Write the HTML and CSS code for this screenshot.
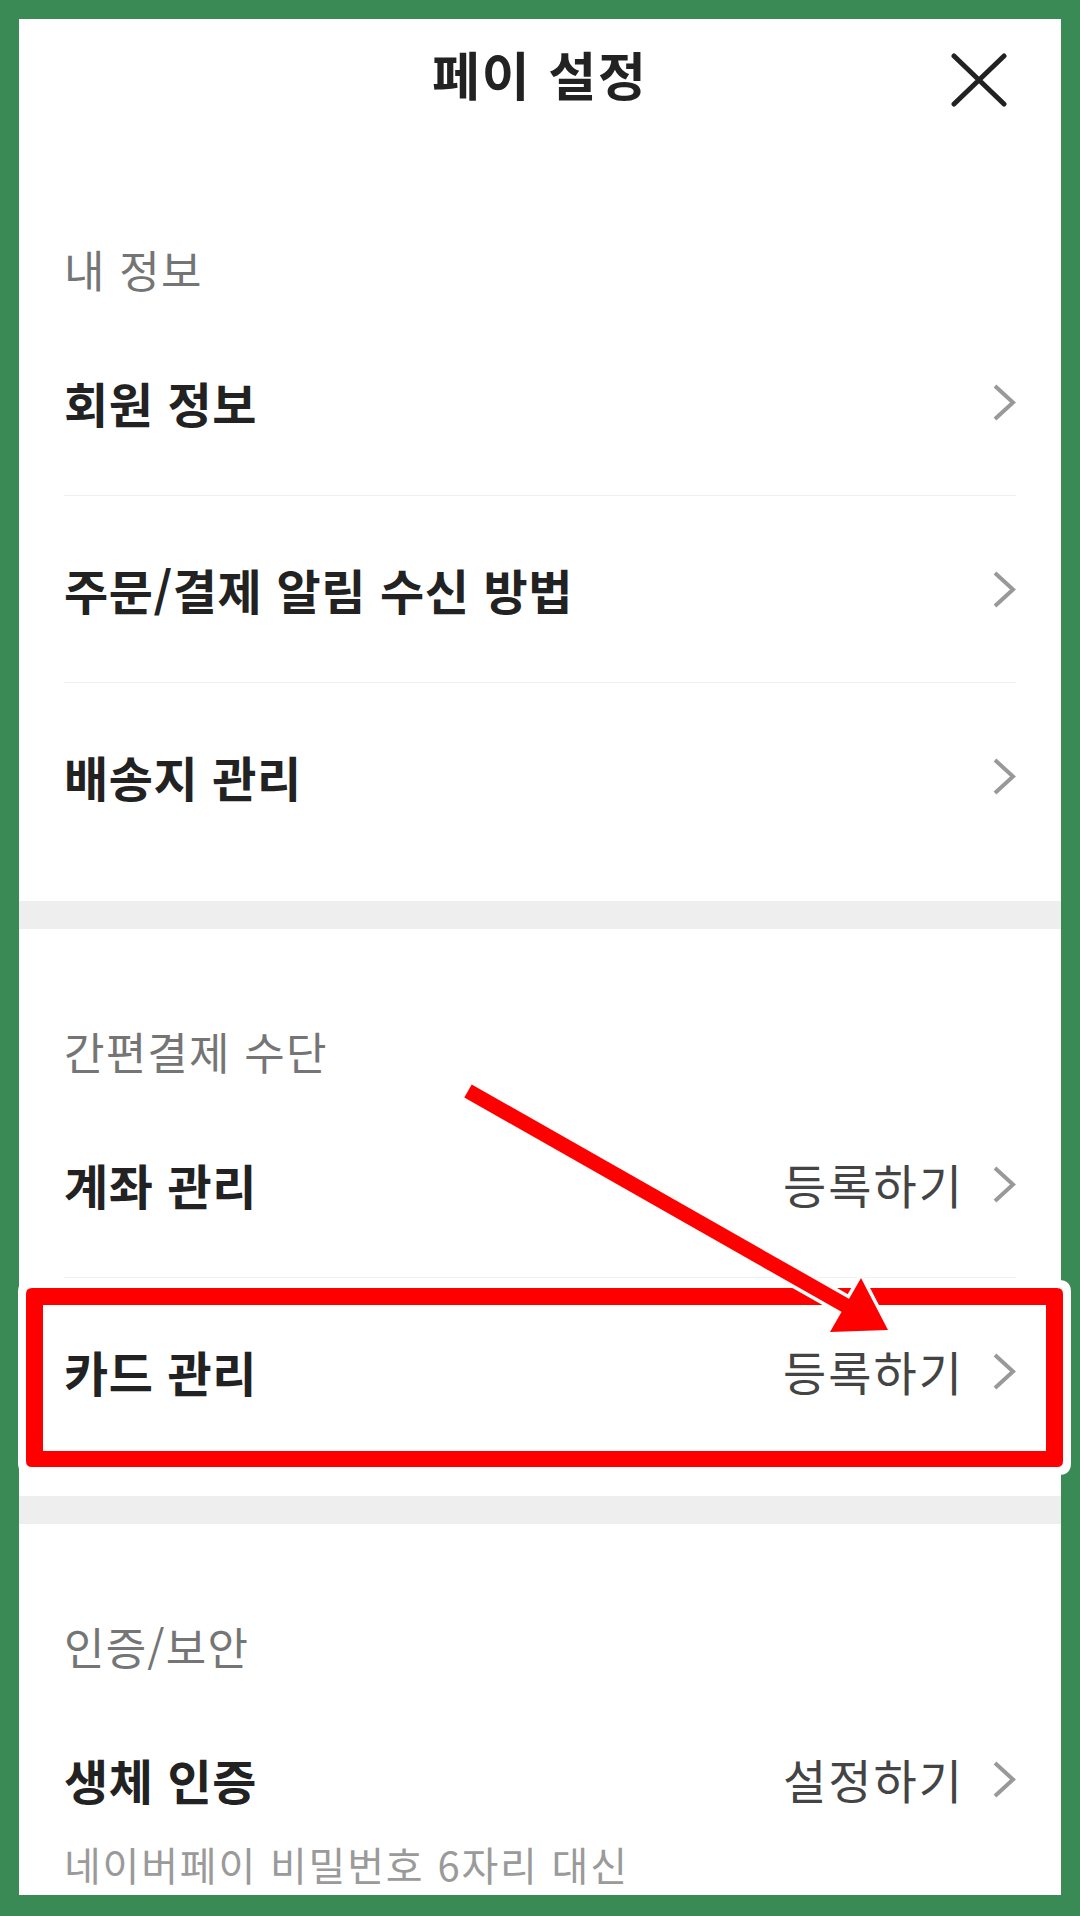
FILE: index.html
```html
<!DOCTYPE html>
<html lang="ko">
<head>
    <meta charset="UTF-8">
    <meta name="viewport" content="width=device-width, initial-scale=1.0">
    <title>페이 설정</title>
    <link rel="stylesheet" href="styles.css">
</head>
<body>

<div class="sheet">
    <header class="top-bar">
        <span></span>
        <h1>페이 설정</h1>
        <button class="close" aria-label="닫기">
            <svg width="56" height="54" viewBox="0 0 56 54">
                <path d="M3 3 L53 51 M53 3 L3 51" stroke="#222" stroke-width="5" stroke-linecap="round" fill="none"/>
            </svg>
        </button>
    </header>

    <section class="group first">
        <h2 class="group-title">내 정보</h2>
        <ul class="menu">
            <li class="menu-row">
                <span class="menu-name">회원 정보</span>
                <span class="menu-side"><svg class="chevron" viewBox="0 0 23 37"><polyline points="2,2 20,18.5 2,35"/></svg></span>
            </li>
            <li class="menu-row">
                <span class="menu-name">주문/결제 알림 수신 방법</span>
                <span class="menu-side"><svg class="chevron" viewBox="0 0 23 37"><polyline points="2,2 20,18.5 2,35"/></svg></span>
            </li>
            <li class="menu-row">
                <span class="menu-name">배송지 관리</span>
                <span class="menu-side"><svg class="chevron" viewBox="0 0 23 37"><polyline points="2,2 20,18.5 2,35"/></svg></span>
            </li>
        </ul>
    </section>

    <div class="band"></div>

    <section class="group">
        <h2 class="group-title">간편결제 수단</h2>
        <ul class="menu">
            <li class="menu-row">
                <span class="menu-name">계좌 관리</span>
                <span class="menu-side">등록하기<svg class="chevron" viewBox="0 0 23 37"><polyline points="2,2 20,18.5 2,35"/></svg></span>
            </li>
            <li class="menu-row">
                <span class="menu-name">카드 관리</span>
                <span class="menu-side">등록하기<svg class="chevron" viewBox="0 0 23 37"><polyline points="2,2 20,18.5 2,35"/></svg></span>
            </li>
        </ul>
    </section>

    <div class="band"></div>

    <section class="group">
        <h2 class="group-title">인증/보안</h2>
        <ul class="menu">
            <li class="menu-row tall">
                <div class="menu-line">
                    <span class="menu-name">생체 인증</span>
                    <span class="menu-side">설정하기<svg class="chevron" viewBox="0 0 23 37"><polyline points="2,2 20,18.5 2,35"/></svg></span>
                </div>
                <p class="menu-note">네이버페이 비밀번호 6자리 대신</p>
            </li>
        </ul>
    </section>
</div>

<!-- red markup drawn over the screenshot -->
<svg class="markup" width="1080" height="1916" viewBox="0 0 1080 1916">
    <path fill="#fff" fill-rule="evenodd" d="M30 1280 H1059 Q1071 1280 1071 1292 V1463 Q1071 1475 1059 1475 H30 Q18 1475 18 1463 V1292 Q18 1280 30 1280 Z M43 1305 H1046 V1451 H43 Z"/>
    <path fill="#ff0000" fill-rule="evenodd" d="M32 1288 H1057 Q1063 1288 1063 1294 V1461 Q1063 1467 1057 1467 H32 Q26 1467 26 1461 V1294 Q26 1288 32 1288 Z M43 1305 H1046 V1451 H43 Z"/>
    <line x1="468" y1="1091" x2="850" y2="1308" stroke="#fff" stroke-width="22"/>
    <polygon points="888,1330 861,1278 830,1332" fill="#fff" stroke="#fff" stroke-width="7"/>
    <line x1="468" y1="1091" x2="850" y2="1308" stroke="#ff0000" stroke-width="15"/>
    <polygon points="888,1330 861,1278 830,1332" fill="#ff0000"/>
</svg>

</body>
</html>
```

FILE: styles.css
```css
body {
    margin: 0;
    padding: 19px 19px 21px;
    background-color: #3a8a56;
    font-family: "Noto Sans CJK KR", "Noto Sans", sans-serif;
    color: #222;
    position: relative;
}
.sheet {
    background-color: #fff;
    height: 1876px;
    overflow: hidden;
}
.top-bar {
    display: grid;
    grid-template-columns: 1fr auto 1fr;
    align-items: center;
    height: 118px;
}
.top-bar h1 {
    margin: 0 0 8px;
    font-size: 52px;
    font-weight: 700;
    line-height: 60px;
    letter-spacing: 2px;
}
.close {
    justify-self: end;
    margin: 4px 54px 0 0;
    padding: 0;
    border: none;
    background: none;
    display: flex;
}
.group {
    padding: 100px 45px 32px;
}
.group.first {
    padding-top: 110px;
}
.group-title {
    margin: 0 0 18px;
    font-size: 44px;
    font-weight: 400;
    line-height: 44px;
    color: #757575;
    letter-spacing: 1.2px;
}
.menu {
    list-style: none;
    margin: 0;
    padding: 0;
}
.menu-row {
    display: flex;
    align-items: center;
    justify-content: space-between;
    height: 186px;
    border-bottom: 1px solid #f0f0f0;
}
.menu-row:last-child {
    border-bottom: none;
}
.menu-row.tall {
    display: block;
    height: auto;
    padding-top: 63px;
}
.menu-line {
    display: flex;
    align-items: center;
    justify-content: space-between;
    height: 60px;
}
.menu-name {
    font-size: 48px;
    font-weight: 700;
    letter-spacing: 0.6px;
    line-height: 60px;
}
.menu-side {
    display: flex;
    align-items: center;
    font-size: 47px;
    color: #444;
    letter-spacing: 2px;
    line-height: 60px;
}
.chevron {
    width: 23px;
    height: 37px;
    margin-left: 29px;
    fill: none;
    stroke: #999;
    stroke-width: 4;
}
.menu-note {
    margin: 30px 0 0;
    font-size: 40px;
    line-height: 50px;
    color: #9a9a9a;
    letter-spacing: 1.8px;
}
.band {
    height: 28px;
    background-color: #eeeeee;
}
.markup {
    position: absolute;
    top: 0;
    left: 0;
    pointer-events: none;
}
```
